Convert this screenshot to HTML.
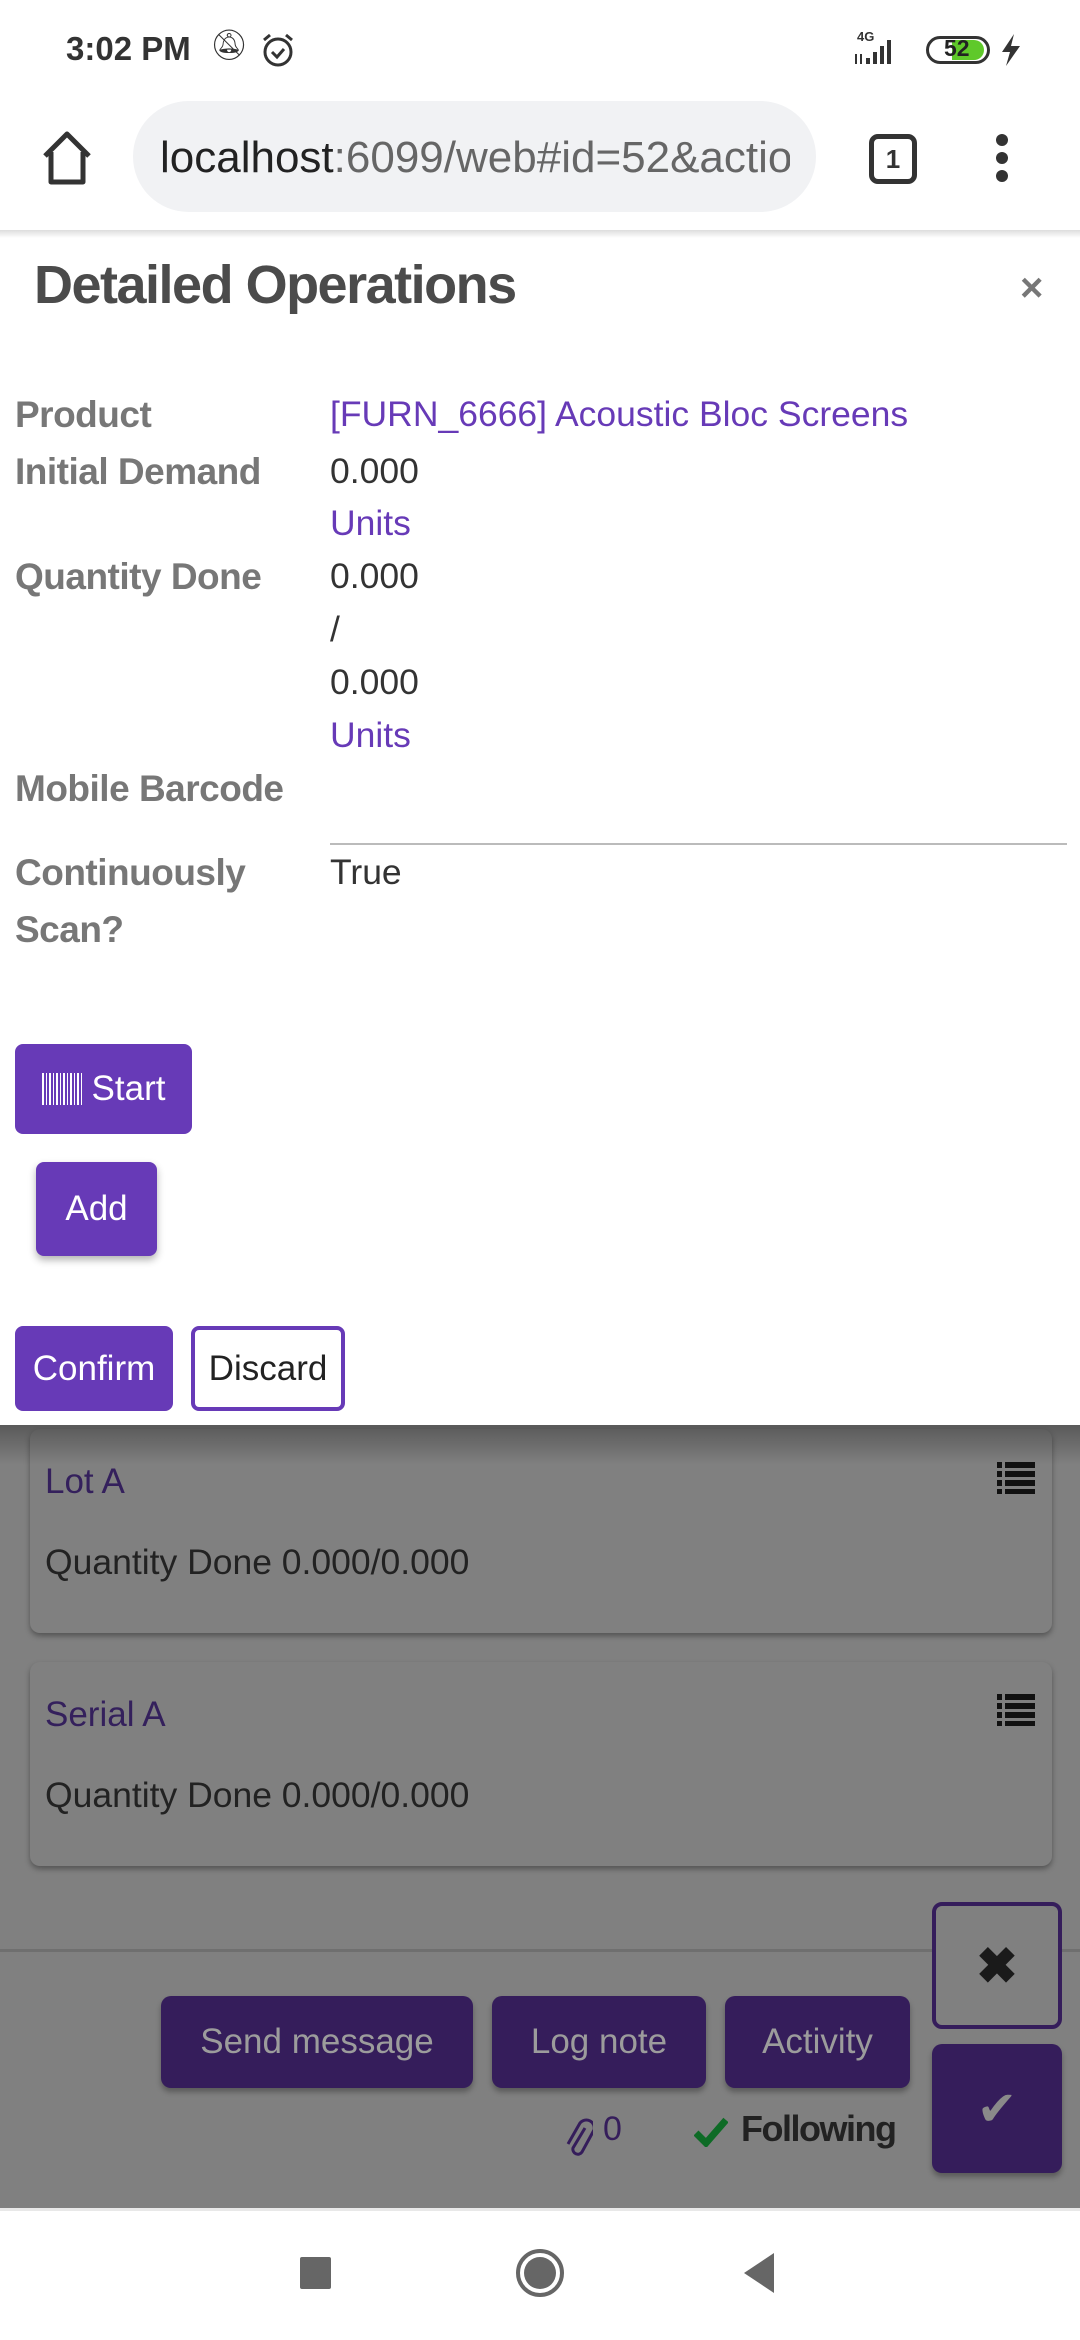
<!DOCTYPE html>
<html><head><meta charset="utf-8"><style>
*{margin:0;padding:0;box-sizing:border-box}
body{width:1080px;height:2340px;position:relative;overflow:hidden;background:#808080;font-family:"Liberation Sans",Arial,sans-serif}
.a{position:absolute}
.lbl{position:absolute;left:15px;font-size:37px;font-weight:bold;color:#777;letter-spacing:-0.5px}
.val{position:absolute;left:330px;font-size:35.5px;color:#333}
.lnk{color:#673ab7}
.btn{position:absolute;background:#673ab7;color:#fff;font-size:35px;border-radius:8px;display:flex;align-items:center;justify-content:center}
.card{position:absolute;left:30px;width:1022px;background:#808080;border-radius:10px;box-shadow:0 3px 6px rgba(0,0,0,0.35)}
.dbtn{position:absolute;top:1996px;height:92px;background:#351d5b;color:#9c9c9c;font-size:35px;border-radius:10px;display:flex;align-items:center;justify-content:center;box-shadow:0 4px 6px rgba(0,0,0,0.3)}
</style></head><body>
<div class="a" style="left:0;top:0;width:1080px;height:1425px;background:#fff"></div>
<div class="a" style="left:66px;top:30px;font-size:33px;font-weight:bold;color:#333">3:02 PM</div>
<div class="a" style="left:210px;top:28px;font-size:30px;color:#333">&#x1F515;&#xFE0E;</div>
<svg class="a" style="left:260px;top:32px" width="36" height="36" viewBox="0 0 36 36"><circle cx="18" cy="20" r="13" fill="none" stroke="#333" stroke-width="3"/><path d="M12 20l5 5 7-8" fill="none" stroke="#333" stroke-width="3"/><path d="M4 8l6-5M32 8l-6-5" stroke="#333" stroke-width="3"/></svg>
<div class="a" style="left:857px;top:29px;font-size:13px;font-weight:bold;color:#333">4G</div>
<svg class="a" style="left:852px;top:36px" width="60" height="30"><rect x="14" y="22" width="4" height="6" fill="#333"/><rect x="21" y="16" width="4" height="12" fill="#333"/><rect x="28" y="10" width="4" height="18" fill="#333"/><rect x="35" y="4" width="4" height="24" fill="#333"/><rect x="3" y="18" width="2" height="10" fill="#333"/><rect x="8" y="18" width="2" height="10" fill="#333"/></svg>
<div class="a" style="left:926px;top:36px;width:64px;height:28px;border:3px solid #333;border-radius:14px"></div>
<div class="a" style="left:952px;top:40px;width:32px;height:20px;background:#5fc92a;border-radius:0 10px 10px 0"></div>
<div class="a" style="left:944px;top:35px;font-size:23px;font-weight:bold;color:#222">52</div>
<svg class="a" style="left:1000px;top:34px" width="22" height="32"><path d="M14 0L2 18h8l-4 14 14-20h-9z" fill="#333"/></svg>
<svg class="a" style="left:40px;top:130px" width="54" height="56" viewBox="0 0 54 56"><path d="M5 26L27 4l22 22M11 22v30h32V22" fill="none" stroke="#333" stroke-width="5" stroke-linejoin="round"/></svg>
<div class="a" style="left:133px;top:101px;width:683px;height:111px;background:#f1f2f4;border-radius:56px"></div>
<div class="a" style="left:160px;top:133px;font-size:44px;color:#222;white-space:nowrap;width:630px;overflow:hidden">localhost<span style="color:#666">:6099/web#id=52&amp;action</span></div>
<div class="a" style="left:869px;top:134px;width:48px;height:50px;border:5px solid #333;border-radius:9px;font-size:26px;font-weight:bold;color:#333;text-align:center;line-height:40px">1</div>
<div class="a" style="left:996px;top:134px;width:12px;height:12px;border-radius:6px;background:#333"></div>
<div class="a" style="left:996px;top:152px;width:12px;height:12px;border-radius:6px;background:#333"></div>
<div class="a" style="left:996px;top:170px;width:12px;height:12px;border-radius:6px;background:#333"></div>
<div class="a" style="left:0;top:230px;width:1080px;height:8px;background:linear-gradient(#ddd,#fff)"></div>
<div class="a" style="left:34px;top:254px;font-size:54px;font-weight:bold;color:#4b4b4b;letter-spacing:-1.5px">Detailed Operations</div>
<div class="a" style="left:1020px;top:266px;font-size:40px;color:#777;font-weight:bold">×</div>
<div class="lbl" style="top:394px">Product</div>
<div class="val lnk" style="top:394px">[FURN_6666] Acoustic Bloc Screens</div>
<div class="lbl" style="top:451px">Initial Demand</div>
<div class="val" style="top:451px">0.000</div>
<div class="val lnk" style="top:503px">Units</div>
<div class="lbl" style="top:556px">Quantity Done</div>
<div class="val" style="top:556px">0.000</div>
<div class="val" style="top:609px">/</div>
<div class="val" style="top:662px">0.000</div>
<div class="val lnk" style="top:715px">Units</div>
<div class="lbl" style="top:768px">Mobile Barcode</div>
<div class="a" style="left:330px;top:843px;width:737px;height:2px;background:#bbb"></div>
<div class="lbl" style="top:852px">Continuously</div>
<div class="lbl" style="top:909px">Scan?</div>
<div class="val" style="top:852px">True</div>
<div class="btn" style="left:15px;top:1044px;width:177px;height:90px"><span style="display:inline-block;width:40px;height:32px;margin-right:10px;background:repeating-linear-gradient(90deg,#fff 0 2px,transparent 2px 4px,#fff 4px 5px,transparent 5px 7px)"></span>Start</div>
<div class="btn" style="left:36px;top:1162px;width:121px;height:94px;box-shadow:0 4px 8px rgba(0,0,0,0.3)">Add</div>
<div class="btn" style="left:15px;top:1326px;width:158px;height:85px">Confirm</div>
<div class="btn" style="left:191px;top:1326px;width:154px;height:85px;background:#fff;color:#222;border:4px solid #673ab7">Discard</div>
<div class="a" style="left:0;top:1425px;width:1080px;height:40px;background:linear-gradient(rgba(0,0,0,0.3),rgba(0,0,0,0))"></div>
<div class="card" style="top:1429px;height:204px;background:transparent"></div>
<div class="a" style="left:45px;top:1462px;font-size:35px;color:#34205c">Lot A</div>
<div class="a" style="left:45px;top:1542px;font-size:35.5px;color:#222">Quantity Done 0.000/0.000</div>
<svg class="a" style="left:997px;top:1462px" width="38" height="32"><g fill="#111"><rect x="0" y="0" width="5" height="6"/><rect x="8" y="0" width="30" height="6"/><rect x="0" y="9" width="5" height="6"/><rect x="8" y="9" width="30" height="6"/><rect x="0" y="18" width="5" height="6"/><rect x="8" y="18" width="30" height="6"/><rect x="0" y="27" width="5" height="5"/><rect x="8" y="27" width="30" height="5"/></g></svg>
<div class="card" style="top:1662px;height:204px"></div>
<div class="a" style="left:45px;top:1695px;font-size:35px;color:#34205c">Serial A</div>
<div class="a" style="left:45px;top:1775px;font-size:35.5px;color:#222">Quantity Done 0.000/0.000</div>
<svg class="a" style="left:997px;top:1694px" width="38" height="32"><g fill="#111"><rect x="0" y="0" width="5" height="6"/><rect x="8" y="0" width="30" height="6"/><rect x="0" y="9" width="5" height="6"/><rect x="8" y="9" width="30" height="6"/><rect x="0" y="18" width="5" height="6"/><rect x="8" y="18" width="30" height="6"/><rect x="0" y="27" width="5" height="5"/><rect x="8" y="27" width="30" height="5"/></g></svg>
<div class="a" style="left:0;top:1949px;width:1080px;height:3px;background:#6f6f6f"></div>
<div class="dbtn" style="left:161px;width:312px">Send message</div>
<div class="dbtn" style="left:492px;width:214px">Log note</div>
<div class="dbtn" style="left:725px;width:185px">Activity</div>
<svg class="a" style="left:563px;top:2114px" width="30" height="44" viewBox="0 0 30 44"><path d="M22 14L10 34a5 5 0 0 0 9 4l12-22a8 8 0 0 0-14-7L5 30" fill="none" stroke="#351d5b" stroke-width="3"/></svg>
<div class="a" style="left:603px;top:2110px;font-size:34px;color:#351d5b">0</div>
<svg class="a" style="left:694px;top:2117px" width="34" height="30"><path d="M2 16l10 10L32 3" fill="none" stroke="#0e6b26" stroke-width="7"/></svg>
<div class="a" style="left:741px;top:2108px;font-size:36px;font-weight:bold;color:#222;letter-spacing:-1.5px">Following</div>
<div class="a" style="left:932px;top:1902px;width:130px;height:127px;border:4px solid #351d5b;border-radius:10px;background:#808080;display:flex;align-items:center;justify-content:center;font-size:50px;font-weight:bold;color:#1a1a1a">✖</div>
<div class="a" style="left:932px;top:2044px;width:130px;height:129px;background:#351d5b;border-radius:10px;box-shadow:0 4px 6px rgba(0,0,0,0.3);display:flex;align-items:center;justify-content:center;font-size:48px;color:#8a8a8a">✔</div>
<div class="a" style="left:0;top:2208px;width:1080px;height:132px;background:#fff;border-top:3px solid #e8e8e8"></div>
<div class="a" style="left:300px;top:2257px;width:31px;height:32px;background:#666;border-radius:2px"></div>
<div class="a" style="left:516px;top:2249px;width:48px;height:48px;border:4px solid #666;border-radius:50%"></div>
<div class="a" style="left:524px;top:2257px;width:32px;height:32px;background:#666;border-radius:50%"></div>
<svg class="a" style="left:742px;top:2253px" width="34" height="40"><path d="M32 0v40L2 20z" fill="#666"/></svg>
</body></html>
